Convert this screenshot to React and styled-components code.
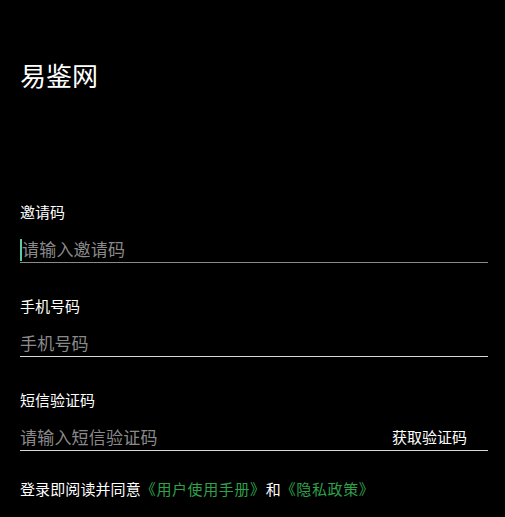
import { createGlobalStyle, styled } from 'styled-components';

const GlobalStyle = createGlobalStyle`
  html, body {
    margin: 0;
    padding: 0;
    background: #000;
  }
  body {
    font-family: "Noto Sans CJK SC", "Noto Sans", sans-serif;
    color: #fff;
  }
`;

const fields = [
  { label: '邀请码', placeholder: '请输入邀请码', focused: true, line: '#8a8a8a' },
  { label: '手机号码', placeholder: '手机号码', line: '#d8d8d8' },
  { label: '短信验证码', placeholder: '请输入短信验证码', line: '#d8d8d8', action: '获取验证码' },
];

const App = () => {
  return (
    <>
      <GlobalStyle />
      <PageStyled>
        <TitleStyled>易鉴网</TitleStyled>
        <FormStyled>
          {fields.map((f) => (
            <FieldStyled key={f.label}>
              <LabelStyled>{f.label}</LabelStyled>
              <InputRowStyled $line={f.line}>
                {f.focused && <CaretStyled />}
                <InputStyled placeholder={f.placeholder} />
                {f.action && <ActionStyled>{f.action}</ActionStyled>}
              </InputRowStyled>
            </FieldStyled>
          ))}
        </FormStyled>
        <AgreementStyled>
          登录即阅读并同意<LinkStyled>《用户使用手册》</LinkStyled>和<LinkStyled>《隐私政策》</LinkStyled>
        </AgreementStyled>
      </PageStyled>
    </>
  );
};

export default App;

const PageStyled = styled.div`
  display: flex;
  flex-direction: column;
  width: 505px;
  height: 517px;
  box-sizing: border-box;
  padding: 57px 17px 0 20px;
  background: #000;
  overflow: hidden;
`;

const TitleStyled = styled.div`
  font-size: 26px;
  line-height: 36px;
  color: #fff;
`;

const FormStyled = styled.div`
  display: flex;
  flex-direction: column;
  gap: 33px;
  margin-top: 109px;
`;

const FieldStyled = styled.div`
  display: flex;
  flex-direction: column;
  gap: 15px;
`;

const LabelStyled = styled.div`
  font-size: 15px;
  line-height: 20px;
  color: #fff;
`;

const InputRowStyled = styled.div`
  display: flex;
  align-items: center;
  height: 24px;
  border-bottom: 1px solid ${(p) => p.$line};
  padding-bottom: 1px;
`;

const CaretStyled = styled.span`
  width: 2px;
  height: 22px;
  margin-top: 2px;
  background: #5cc9a7;
  flex-shrink: 0;
`;

const InputStyled = styled.input`
  flex: 1;
  min-width: 0;
  border: none;
  outline: none;
  background: transparent;
  padding: 0;
  margin: 0;
  font-family: inherit;
  font-size: 17px;
  line-height: 24px;
  letter-spacing: 0.2px;
  color: #fff;

  &::placeholder {
    color: #8a8a8a;
  }
`;

const ActionStyled = styled.span`
  font-size: 15px;
  line-height: 20px;
  color: #fff;
  margin-right: 21px;
`;

const AgreementStyled = styled.div`
  margin-top: 28px;
  font-size: 15px;
  line-height: 20px;
  letter-spacing: 0.1px;
  color: #fff;
`;

const LinkStyled = styled.span`
  color: #2fa14c;
  letter-spacing: 0.6px;
`;
